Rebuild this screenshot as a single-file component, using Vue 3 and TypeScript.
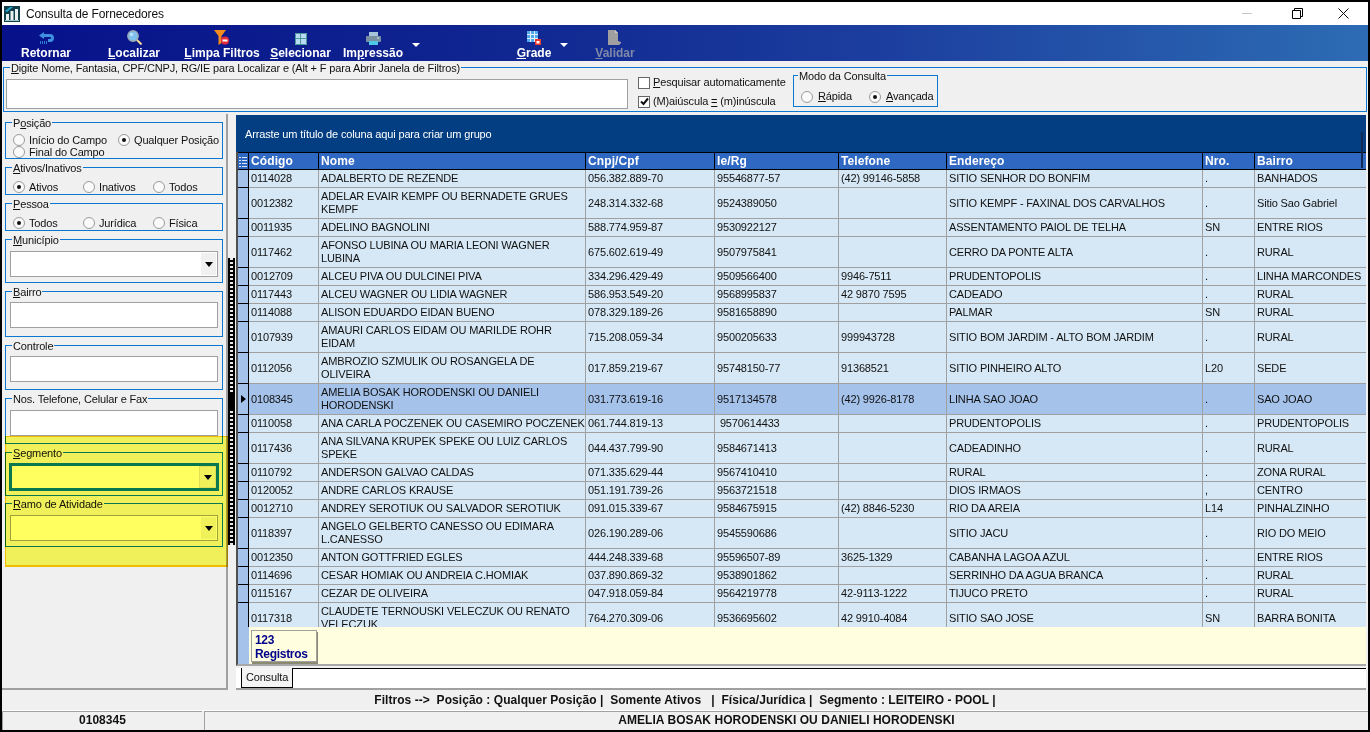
<template>
  <div class="window">
    <header class="titlebar">
      <svg class="app-icon" width="16" height="16" viewBox="0 0 16 16">
        <rect width="16" height="16" fill="#123f4a" />
        <path d="M1 5 L6 1 L9 1 L3 6 Z" fill="#1fa5c8" />
        <path d="M2 8h3v6H2zM6.500 5h3v9h-3zM11 3h3v11h-3z" fill="#e8f0f0" />
        <rect x="1" y="14" width="14" height="1" fill="#9fc4cc" />
      </svg>
      <span class="title">Consulta de Fornecedores</span>
      <div class="win-btns">
        <span class="win-min"></span>
        <svg class="win-restore" width="11" height="11" viewBox="0 0 11 11" fill="none" stroke="#000">
          <path d="M.5 2.500h8v8h-8zM2.500 2.500v-2h8v8h-2" />
        </svg>
        <svg class="win-close" width="11" height="11" viewBox="0 0 11 11" stroke="#111">
          <path d="M.5.500l10 10M10.500.500l-10 10" />
        </svg>
      </div>
    </header>

    <nav class="toolbar">
      <div class="tool tool-retornar">
        <svg width="15" height="13" viewBox="0 0 15 13">
          <path d="M5 0 L0 3.500 L5 7 V5 H11 Q12 5 12 6 Q12 7 11 7 H9 V10 H11 Q15 10 15 6 Q15 2 11 2 H5 Z" fill="#3f8fe0" />
          <path d="M1 9h1v3H1zM3 9h1v3H3zM5 9h1v3H5zM7 9h1v3H7z" fill="#2f7fd8" />
        </svg>
        <span class="tool-label">Retornar</span>
      </div>
      <div class="tool tool-localizar">
        <svg width="15" height="15" viewBox="0 0 15 15">
          <path d="M9.500 9.500l5 5" stroke="#f0d890" stroke-width="2" />
          <circle cx="6" cy="6" r="5.200" fill="#7fc0ee" stroke="#9aa8b4" stroke-width="1.400" />
          <circle cx="4.500" cy="4.500" r="1.800" fill="#b8e0f8" />
        </svg>
        <span class="tool-label"><u>L</u>ocalizar</span>
      </div>
      <div class="tool tool-limpa">
        <svg width="16" height="15" viewBox="0 0 16 15">
          <path d="M0 0h12L7.500 6v7L4.500 15V6Z" fill="#f58a1f" />
          <circle cx="11" cy="10.500" r="4" fill="#e8283a" />
          <rect x="8.500" y="9.500" width="5" height="2" fill="#fff" />
        </svg>
        <span class="tool-label"><u>L</u>impa Filtros</span>
      </div>
      <div class="tool tool-selecionar">
        <svg width="12" height="12" viewBox="0 0 12 12">
          <rect width="12" height="12" fill="#b8daf6" />
          <path d="M.5.500h11v11H.500zM0 5.500h12M5.500 0v12" fill="none" stroke="#4a9a98" />
        </svg>
        <span class="tool-label"><u>S</u>elecionar</span>
      </div>
      <div class="tool tool-impressao">
        <svg width="15" height="13" viewBox="0 0 15 13">
          <rect x="3" y="0" width="9" height="4" fill="#a8c4d8" />
          <rect x="0" y="4" width="15" height="6" rx="1" fill="#7890a0" />
          <rect x="3" y="9" width="9" height="4" fill="#4fc8e8" />
          <rect x="11" y="5.500" width="2" height="1" fill="#dceaf2" />
        </svg>
        <span class="tool-label">Im<u>p</u>ressão</span>
      </div>
      <span class="caret caret-print"></span>
      <div class="tool tool-grade">
        <svg width="14" height="14" viewBox="0 0 14 14">
          <rect width="11" height="11" fill="#52a8ee" />
          <path d="M3.500 0v11M7.500 0v11M0 3.500h11M0 7.500h11" stroke="#dff0fc" />
          <rect x="8" y="8" width="6" height="6" fill="#e8392c" />
          <rect x="9.500" y="10" width="3" height="2.500" fill="#fff" />
        </svg>
        <span class="tool-label"><u>G</u>rade</span>
      </div>
      <span class="caret caret-grade"></span>
      <div class="tool tool-validar">
        <svg width="14" height="15" viewBox="0 0 14 15">
          <path d="M0 0h7l3 3v8l3 1v1l-2 2H0Z" fill="#a0a0a0" />
          <path d="M7 0l3 3H7Z" fill="#d0d0d0" />
        </svg>
        <span class="tool-label disabled"><u>V</u>alidar</span>
      </div>
    </nav>

    <section class="search">
      <div class="group search-group">
        <span class="legend"><u>D</u>igite Nome, Fantasia, CPF/CNPJ, RG/IE para Localizar e (Alt + F para Abrir Janela de Filtros)</span>
        <div class="input search-input"></div>
        <div class="checks">
          <label class="opt"><span class="check"></span><span><u>P</u>esquisar automaticamente</span></label>
          <label class="opt">
            <span class="check">
              <svg width="9" height="9" viewBox="0 0 9 9"><path d="M1 4.500l2.500 2.500L8 1.500" fill="none" stroke="#111" stroke-width="2" /></svg>
            </span>
            <span>(M)aiúscula <u>=</u> (m)inúscula</span>
          </label>
        </div>
        <div class="group modo-group">
          <span class="legend">Modo da Consulta</span>
          <label class="opt modo-a"><span class="radio"></span><span><u>R</u>ápida</span></label>
          <label class="opt modo-b"><span class="radio on"></span><span><u>A</u>vançada</span></label>
        </div>
      </div>
    </section>

    <main class="main">
      <aside class="filters">
        <div class="group f-posicao">
          <span class="legend">P<u>o</u>sição</span>
          <label class="opt"><span class="radio"></span><span>Início do Campo</span></label>
          <label class="opt"><span class="radio on"></span><span>Qualquer Posição</span></label>
          <label class="opt"><span class="radio"></span><span>Final do Campo</span></label>
        </div>
        <div class="group f-radio">
          <span class="legend"><u>A</u>tivos/Inativos</span>
          <label class="opt"><span class="radio on"></span><span>Ativos</span></label>
          <label class="opt"><span class="radio"></span><span>Inativos</span></label>
          <label class="opt"><span class="radio"></span><span>Todos</span></label>
        </div>
        <div class="group f-radio">
          <span class="legend"><u>P</u>essoa</span>
          <label class="opt"><span class="radio on"></span><span>Todos</span></label>
          <label class="opt"><span class="radio"></span><span>Jurídica</span></label>
          <label class="opt"><span class="radio"></span><span>Física</span></label>
        </div>
        <div class="group f-field">
          <span class="legend"><u>M</u>unicípio</span>
          <div class="input select"><span class="drop"><i class="drop-arrow"></i></span></div>
        </div>
        <div class="group f-field f-tall f-up">
          <span class="legend"><u>B</u>airro</span>
          <div class="input"></div>
        </div>
        <div class="group f-field f-mid f-up">
          <span class="legend">Controle</span>
          <div class="input"></div>
        </div>
        <div class="group f-field f-tall">
          <span class="legend">Nos. Telefone, Celular e Fax</span>
          <div class="input"></div>
        </div>
        <div class="group f-field">
          <span class="legend"><u>S</u>egmento</span>
          <div class="input select focused"><span class="drop"><i class="drop-arrow"></i></span></div>
        </div>
        <div class="group f-field f-ramo">
          <span class="legend"><u>R</u>amo de Atividade</span>
          <div class="input select"><span class="drop"><i class="drop-arrow"></i></span></div>
        </div>
        <div class="highlight"></div>
      </aside>

      <div class="splitter">
        <div class="grip"></div>
        <div class="grip-mid"></div>
        <div class="grip"></div>
      </div>

      <div class="content">
        <div class="grid">
          <div class="group-band">Arraste um título de coluna aqui para criar um grupo</div>
          <div class="band-scroll"></div>
          <div class="head row-cols">
            <span class="ind-head">
              <svg width="8" height="10" viewBox="0 0 8 10"><path d="M0 .5h2M0 3.500h2M0 6.500h2M0 9.500h2M3 .5h5M3 3.500h5M3 6.500h5M3 9.500h5" stroke="#dce8f8" /></svg>
            </span>
            <span v-for="c in columns" :key="c" class="hcell">{{ c }}</span>
          </div>
          <div class="body">
            <div
              v-for="r in rows"
              :key="r.codigo"
              class="row row-cols"
              :class="{ tall: r.nome.includes('|'), current: r.codigo === currentCodigo }"
            >
              <span class="ind"><i v-if="r.codigo === currentCodigo" class="ind-arrow"></i></span>
              <span class="cell">{{ r.codigo }}</span>
              <span class="cell cell-nome">
                <span v-for="l in r.nome.split('|')" :key="l">{{ l }}</span>
              </span>
              <span class="cell">{{ r.cnpj }}</span>
              <span class="cell">{{ r.ie }}</span>
              <span class="cell">{{ r.tel }}</span>
              <span class="cell">{{ r.end }}</span>
              <span class="cell">{{ r.nro }}</span>
              <span class="cell">{{ r.bairro }}</span>
            </div>
          </div>
          <div class="grid-foot">
            <span class="foot-ind"></span>
            <div class="foot-box">123<br />Registros</div>
          </div>
        </div>
        <div class="tabs"><span class="tab">Consulta</span><span class="tab-rest"></span></div>
      </div>
    </main>

    <footer class="status">
      <div class="status-filter">{{ filtro }}</div>
      <div class="status-row">
        <span class="st-code">{{ currentCodigo }}</span>
        <span class="st-name">AMELIA BOSAK HORODENSKI OU DANIELI HORODENSKI</span>
      </div>
    </footer>
  </div>
</template>

<script setup lang="ts">
interface Fornecedor {
  codigo: string;
  nome: string;
  cnpj: string;
  ie: string;
  tel: string;
  end: string;
  nro: string;
  bairro: string;
}

const columns = ["Código", "Nome", "Cnpj/Cpf", "Ie/Rg", "Telefone", "Endereço", "Nro.", "Bairro"];
const currentCodigo = "0108345";
const filtro = "Filtros -->  Posição : Qualquer Posição |  Somente Ativos   |  Física/Jurídica |  Segmento : LEITEIRO - POOL |";

const raw = [
  "0114028;ADALBERTO DE REZENDE;056.382.889-70;95546877-57;(42) 99146-5858;SITIO SENHOR DO BONFIM;.;BANHADOS",
  "0012382;ADELAR EVAIR KEMPF OU BERNADETE GRUES|KEMPF;248.314.332-68;9524389050;;SITIO KEMPF - FAXINAL DOS CARVALHOS;.;Sitio Sao Gabriel",
  "0011935;ADELINO BAGNOLINI;588.774.959-87;9530922127;;ASSENTAMENTO PAIOL DE TELHA;SN;ENTRE RIOS",
  "0117462;AFONSO LUBINA OU MARIA LEONI WAGNER|LUBINA;675.602.619-49;9507975841;;CERRO DA PONTE ALTA;.;RURAL",
  "0012709;ALCEU PIVA OU DULCINEI PIVA;334.296.429-49;9509566400;9946-7511;PRUDENTOPOLIS;.;LINHA MARCONDES",
  "0117443;ALCEU WAGNER OU LIDIA WAGNER;586.953.549-20;9568995837;42 9870 7595;CADEADO;.;RURAL",
  "0114088;ALISON EDUARDO EIDAN BUENO;078.329.189-26;9581658890;;PALMAR;SN;RURAL",
  "0107939;AMAURI CARLOS EIDAM OU MARILDE ROHR|EIDAM;715.208.059-34;9500205633;999943728;SITIO BOM JARDIM - ALTO BOM JARDIM;.;RURAL",
  "0112056;AMBROZIO SZMULIK OU ROSANGELA DE|OLIVEIRA;017.859.219-67;95748150-77;91368521;SITIO PINHEIRO ALTO;L20;SEDE",
  "0108345;AMELIA BOSAK HORODENSKI OU DANIELI|HORODENSKI;031.773.619-16;9517134578;(42) 9926-8178;LINHA SAO JOAO;.;SAO JOAO",
  "0110058;ANA CARLA POCZENEK OU CASEMIRO POCZENEK;061.744.819-13; 9570614433;;PRUDENTOPOLIS;.;PRUDENTOPOLIS",
  "0117436;ANA SILVANA KRUPEK SPEKE OU LUIZ CARLOS|SPEKE;044.437.799-90;9584671413;;CADEADINHO;.;RURAL",
  "0110792;ANDERSON GALVAO CALDAS;071.335.629-44;9567410410;;RURAL;.;ZONA RURAL",
  "0120052;ANDRE CARLOS KRAUSE;051.191.739-26;9563721518;;DIOS IRMAOS;,;CENTRO",
  "0012710;ANDREY SEROTIUK OU SALVADOR SEROTIUK;091.015.339-67;9584675915;(42) 8846-5230;RIO DA AREIA;L14;PINHALZINHO",
  "0118397;ANGELO GELBERTO CANESSO OU EDIMARA|L.CANESSO;026.190.289-06;9545590686;;SITIO JACU;.;RIO DO MEIO",
  "0012350;ANTON GOTTFRIED EGLES;444.248.339-68;95596507-89;3625-1329;CABANHA LAGOA AZUL;.;ENTRE RIOS",
  "0114696;CESAR HOMIAK OU ANDREIA C.HOMIAK;037.890.869-32;9538901862;;SERRINHO DA AGUA BRANCA;.;RURAL",
  "0115167;CEZAR DE OLIVEIRA;047.918.059-84;9564219778;42-9113-1222;TIJUCO PRETO;.;RURAL",
  "0117318;CLAUDETE TERNOUSKI VELECZUK OU RENATO|VELECZUK;764.270.309-06;9536695602;42 9910-4084;SITIO SAO JOSE;SN;BARRA BONITA",
];

const rows: Fornecedor[] = raw.map((line) => {
  const [codigo, nome, cnpj, ie, tel, end, nro, bairro] = line.split(";");
  return { codigo, nome, cnpj, ie, tel, end, nro, bairro };
});
</script>

<style>
html,
body {
  margin: 0;
  background: #000;
}
</style>

<style scoped>
.window {
  width: 1366px;
  height: 728px;
  border: 2px solid #000;
  display: flex;
  flex-direction: column;
  background: #f0f0f0;
  font-family: "Liberation Sans", sans-serif;
  font-size: 11px;
  letter-spacing: -0.15px;
  color: #111;
  overflow: hidden;
}

.titlebar {
  height: 23px;
  flex: none;
  background: #fff;
  display: flex;
  align-items: center;
  padding-left: 2px;
}
.app-icon {
  margin-right: 6px;
}
.title {
  font-size: 12px;
}
.win-btns {
  margin-left: auto;
  display: flex;
  align-items: center;
}
.win-min {
  width: 10px;
  height: 1px;
  background: #c8c8c8;
  margin-right: 40px;
}
.win-restore {
  margin-right: 35px;
}
.win-close {
  margin-right: 19px;
}

.toolbar {
  height: 36px;
  flex: none;
  display: flex;
  align-items: flex-start;
  background: linear-gradient(90deg, #07118a 0%, #0f2590 35%, #1c3f9f 65%, #2d6cb4 100%);
}
.tool {
  display: flex;
  flex-direction: column;
  align-items: center;
  height: 36px;
  justify-content: flex-end;
  padding-bottom: 1px;
  box-sizing: border-box;
}
.tool svg {
  margin-bottom: 1px;
}
.tool-label {
  color: #fff;
  font-weight: 700;
  font-size: 12px;
  line-height: 14px;
  letter-spacing: 0;
  white-space: nowrap;
}
.tool-label.disabled {
  color: #7f8aa8;
}
.tool-retornar {
  width: 52px;
  margin-left: 18px;
}
.tool-localizar {
  width: 50px;
  margin-left: 37px;
}
.tool-limpa {
  width: 72px;
  margin-left: 27px;
}
.tool-selecionar {
  width: 59px;
  margin-left: 13px;
}
.tool-impressao {
  width: 62px;
  margin-left: 12px;
}
.tool-grade {
  width: 36px;
  margin-left: 96px;
}
.tool-validar {
  width: 40px;
  margin-left: 27px;
}
.caret {
  width: 0;
  height: 0;
  border-left: 4px solid transparent;
  border-right: 4px solid transparent;
  border-top: 4px solid #fff;
  margin-top: 18px;
}
.caret-print {
  margin-left: 8px;
}
.caret-grade {
  margin-left: 8px;
}

.group {
  position: relative;
  border: 1px solid #0a78d2;
  box-sizing: border-box;
}
.legend {
  position: absolute;
  top: -7px;
  left: 6px;
  background: #f0f0f0;
  line-height: 14px;
  padding: 0 1px;
  white-space: nowrap;
}
.modo-group .legend {
  left: 4px;
}

.search {
  height: 53px;
  flex: none;
  padding: 6px 1px 2px;
  box-sizing: border-box;
}
.search-group {
  height: 45px;
  display: flex;
  align-items: flex-start;
  padding-left: 2px;
  background: #f0f0f0;
}
.input {
  height: 26px;
  border: 1px solid #a0a0a0;
  background: #fff;
  box-sizing: border-box;
  position: relative;
}
.search-input {
  width: 622px;
  height: 30px;
  margin-top: 11px;
}
.checks {
  width: 155px;
  margin: 8px 0 0 10px;
  display: flex;
  flex-direction: column;
  gap: 6px;
}
.opt {
  display: flex;
  align-items: center;
  gap: 4px;
  line-height: 13px;
  white-space: nowrap;
}
.check {
  width: 12px;
  height: 12px;
  box-sizing: border-box;
  border: 1px solid #666;
  background: #fff;
  display: flex;
  align-items: center;
  justify-content: center;
  margin-right: -1px;
  flex: none;
}
.radio {
  width: 12px;
  height: 12px;
  box-sizing: border-box;
  border: 1px solid #9a9a9a;
  border-radius: 50%;
  background: #fafafa;
  display: flex;
  align-items: center;
  justify-content: center;
  flex: none;
}
.radio.on::after {
  content: "";
  width: 4px;
  height: 4px;
  border-radius: 50%;
  background: #111;
}
.modo-group {
  width: 145px;
  height: 32px;
  margin-top: 7px;
  display: flex;
  align-items: center;
  padding: 11px 0 0 7px;
}
.modo-group .opt {
  gap: 5px;
}
.modo-a {
  width: 68px;
}

.main {
  flex: 1;
  display: flex;
  min-height: 0;
}
.filters {
  width: 226px;
  height: 576px;
  flex: none;
  box-sizing: border-box;
  border-right: 2px solid #a0a0a0;
  border-bottom: 2px solid #a0a0a0;
  padding: 8px 3px 0;
  position: relative;
  display: flex;
  flex-direction: column;
  gap: 8px;
}
.filters .group {
  flex: none;
}
.f-posicao {
  height: 37px;
  padding: 11px 0 0 7px;
  display: grid;
  grid-template-columns: 105px auto;
  grid-auto-rows: 12px;
  align-items: center;
}
.f-posicao .opt {
  line-height: 12px;
}
.f-radio {
  height: 28px;
  padding: 13px 0 0 7px;
  display: grid;
  grid-template-columns: 70px 70px 70px;
  grid-auto-rows: 12px;
  align-items: center;
}
.f-field {
  height: 44px;
  padding: 11px 4px 0;
}
.f-tall {
  height: 46px;
}
.f-mid {
  height: 45px;
}
.f-up {
  padding-top: 10px;
}
.filters .f-ramo {
  margin-top: -1px;
}
.select .drop {
  position: absolute;
  right: 1px;
  top: 1px;
  bottom: 1px;
  width: 15px;
  background: #f0f0f0;
  display: flex;
  align-items: center;
  justify-content: center;
}
.drop-arrow {
  width: 0;
  height: 0;
  border-left: 4.500px solid transparent;
  border-right: 4.500px solid transparent;
  border-top: 5px solid #000;
}
.focused {
  border: 2px solid #0a78d2;
  outline: 1px solid #0a78d2;
}
.focused .drop {
  border: 1px solid #e0e0e0;
  right: 0;
  top: 0;
  bottom: 0;
}
.highlight {
  position: absolute;
  left: 3px;
  top: 322px;
  width: 223px;
  height: 131px;
  box-sizing: border-box;
  background: #ffff60;
  border: 1px solid #ffc800;
  border-bottom-width: 2px;
  mix-blend-mode: multiply;
  pointer-events: none;
}

.splitter {
  width: 8px;
  flex: none;
  padding-top: 144px;
  box-sizing: border-box;
  height: 576px;
  display: flex;
  flex-direction: column;
}
.grip {
  width: 7px;
  height: 134px;
  box-sizing: border-box;
  border-left: 2px solid #000;
  border-right: 2px solid #000;
  background-color: #000;
  background-image: repeating-linear-gradient(180deg, #e8e8e8 0 2px, #000 2px 4px);
}
.grip-mid {
  width: 7px;
  height: 19px;
  background: #000;
}

.content {
  flex: 1;
  min-width: 0;
  display: flex;
  flex-direction: column;
  padding-top: 1px;
  height: 576px;
  box-sizing: border-box;
}
.grid {
  height: 551px;
  flex: none;
  position: relative;
  background: #a0a0a0;
  border-left: 2px solid #505050;
  border-bottom: 2px solid #a8a8a8;
  box-sizing: border-box;
  margin-right: 2px;
}
.group-band {
  height: 37px;
  background: #033e82;
  color: #fff;
  padding: 12px 0 0 9px;
  box-sizing: border-box;
  line-height: 14px;
  margin-left: -2px;
}
.band-scroll {
  position: absolute;
  right: 3px;
  top: 17px;
  width: 2px;
  height: 36px;
  background: #0c2a55;
}
.row-cols {
  display: grid;
  grid-template-columns: 11px 70px 267px 129px 124px 108px 256px 52px 1fr;
}
.head {
  height: 18px;
  background: #2f68c2;
  border-top: 1px solid #000;
  border-bottom: 1px solid #000;
  box-sizing: border-box;
}
.ind-head {
  display: flex;
  align-items: center;
  justify-content: center;
  border-right: 1px solid #000;
}
.hcell {
  color: #fff;
  font-weight: 700;
  font-size: 12px;
  letter-spacing: 0.1px;
  line-height: 17px;
  padding-left: 2px;
  border-right: 1px solid #000;
}
.hcell:last-child {
  border-right: 0;
}
.body {
  height: 457px;
  overflow: hidden;
  background: #a0a0a0;
}
.row {
  height: 18px;
  background: #d6e8f5;
  box-sizing: border-box;
  border-bottom: 1px solid #a0a0a0;
}
.row.tall {
  height: 31px;
}
.row.current {
  background: #a4c2ea;
}
.ind {
  background: #a4c2ea;
  border-right: 1px solid #000;
  border-bottom: 1px solid #000;
  margin-bottom: -1px;
  display: flex;
  align-items: center;
  justify-content: center;
}
.ind-arrow {
  width: 0;
  height: 0;
  border-top: 4px solid transparent;
  border-bottom: 4px solid transparent;
  border-left: 5px solid #000;
}
.cell {
  padding-left: 2px;
  border-right: 1px solid #a0a0a0;
  overflow: hidden;
  display: flex;
  align-items: center;
  line-height: 13px;
  white-space: pre;
}
.cell:last-child {
  border-right: 0;
}
.cell-nome {
  flex-direction: column;
  align-items: flex-start;
  justify-content: center;
}
.row:last-child .cell-nome {
  justify-content: flex-start;
  padding-top: 2px;
}
.grid-foot {
  height: 37px;
  display: flex;
  background: #ffffdf;
}
.foot-ind {
  width: 11px;
  background: #a4c2ea;
  flex: none;
}
.foot-box {
  margin: 3px 0 0 2px;
  width: 66px;
  height: 32px;
  box-sizing: border-box;
  border: 1px solid #a0a0a0;
  box-shadow: 1px 2px 0 #8a8a70;
  padding: 2px 0 0 3px;
  color: #00008b;
  font-weight: 700;
  font-size: 12px;
  letter-spacing: -0.3px;
  line-height: 14px;
}
.tabs {
  height: 22px;
  margin-top: 2px;
  display: flex;
  background: #fff;
  border-bottom: 2px solid #a0a0a0;
  box-sizing: border-box;
  margin-right: 2px;
  padding-left: 5px;
}
.tab {
  width: 52px;
  box-sizing: border-box;
  border: 1px solid #000;
  border-top: 0;
  background: #f4f4f4;
  line-height: 18px;
  text-align: center;
}
.tab-rest {
  flex: 1;
  border-top: 1px solid #000;
}

.status {
  flex: none;
  height: 39px;
  display: flex;
  flex-direction: column;
  font-weight: 700;
  font-size: 12px;
  letter-spacing: 0.05px;
}
.status-filter {
  height: 19px;
  text-align: center;
  line-height: 19px;
  white-space: pre;
  border-bottom: 1px solid #fff;
}
.status-row {
  flex: 1;
  display: flex;
  gap: 2px;
  text-align: center;
  line-height: 17px;
}
.st-code,
.st-name {
  border-top: 1px solid #a0a0a0;
  border-left: 1px solid #a0a0a0;
  box-sizing: border-box;
}
.st-code {
  width: 200px;
}
.st-name {
  flex: 1;
}
</style>
